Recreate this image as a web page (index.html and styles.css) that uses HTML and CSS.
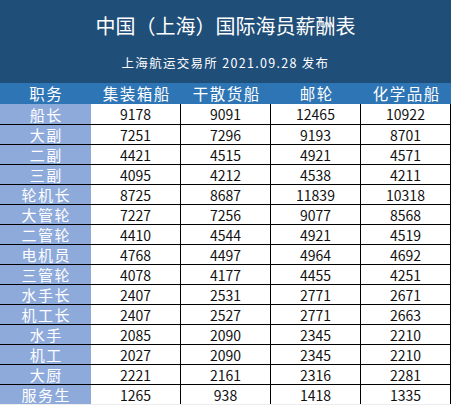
FILE: index.html
```html
<!DOCTYPE html>
<html lang="zh">
<head>
<meta charset="utf-8">
<link rel="stylesheet" href="styles.css">
</head>
<body>
<div class="sheet">
  <div class="banner">
    <div class="title">中国（上海）国际海员薪酬表</div>
    <div class="subtitle">上海航运交易所 2021.09.28 发布</div>
  </div>
  <div class="grid">
    <div class="hd">职务</div><div class="hd">集装箱船</div><div class="hd">干散货船</div><div class="hd">邮轮</div><div class="hd">化学品船</div>

    <div class="rk first">船长</div><div class="v first">9178</div><div class="v first">9091</div><div class="v first">12465</div><div class="v first">10922</div>
    <div class="rk">大副</div><div class="v">7251</div><div class="v">7296</div><div class="v">9193</div><div class="v">8701</div>
    <div class="rk">二副</div><div class="v">4421</div><div class="v">4515</div><div class="v">4921</div><div class="v">4571</div>
    <div class="rk">三副</div><div class="v">4095</div><div class="v">4212</div><div class="v">4538</div><div class="v">4211</div>
    <div class="rk">轮机长</div><div class="v">8725</div><div class="v">8687</div><div class="v">11839</div><div class="v">10318</div>
    <div class="rk">大管轮</div><div class="v">7227</div><div class="v">7256</div><div class="v">9077</div><div class="v">8568</div>
    <div class="rk">二管轮</div><div class="v">4410</div><div class="v">4544</div><div class="v">4921</div><div class="v">4519</div>
    <div class="rk">电机员</div><div class="v">4768</div><div class="v">4497</div><div class="v">4964</div><div class="v">4692</div>
    <div class="rk">三管轮</div><div class="v">4078</div><div class="v">4177</div><div class="v">4455</div><div class="v">4251</div>
    <div class="rk">水手长</div><div class="v">2407</div><div class="v">2531</div><div class="v">2771</div><div class="v">2671</div>
    <div class="rk">机工长</div><div class="v">2407</div><div class="v">2527</div><div class="v">2771</div><div class="v">2663</div>
    <div class="rk">水手</div><div class="v">2085</div><div class="v">2090</div><div class="v">2345</div><div class="v">2210</div>
    <div class="rk">机工</div><div class="v">2027</div><div class="v">2090</div><div class="v">2345</div><div class="v">2210</div>
    <div class="rk">大厨</div><div class="v">2221</div><div class="v">2161</div><div class="v">2316</div><div class="v">2281</div>
    <div class="rk">服务生</div><div class="v">1265</div><div class="v">938</div><div class="v">1418</div><div class="v">1335</div>
  </div>
</div>
</body>
</html>
```
FILE: styles.css
```css
html, body {
  margin: 0;
  padding: 0;
  background: #ededed;
}
body {
  font-family: "Noto Sans CJK SC", "Noto Sans", sans-serif;
  width: 451px;
  height: 405px;
  overflow: hidden;
}
.sheet {
  width: 451px;
  background: #ffffff;
}
.banner {
  height: 83px;
  background: #1f4e79;
  color: #ffffff;
  display: flex;
  flex-direction: column;
  align-items: center;
  box-sizing: border-box;
  padding-top: 13px;
}
.title {
  font-size: 20px;
  line-height: 26px;
}
.subtitle {
  margin-top: 16px;
  font-size: 12.5px;
  line-height: 16px;
  letter-spacing: 1.3px;
}
.grid {
  display: grid;
  grid-template-columns: 91px 90px 90px 90px 90px;
  grid-auto-rows: 20px;
  grid-template-rows: 21px;
  line-height: 1;
}
.grid > div {
  box-sizing: border-box;
  display: flex;
  align-items: center;
  justify-content: center;
  overflow: hidden;
}
.hd {
  background: #2e75b6;
  color: #ffffff;
  font-size: 15.5px;
  letter-spacing: 1.5px;
  padding-left: 1.5px;
}
.rk {
  background: #8eaadb;
  color: #ffffff;
  font-size: 15px;
  letter-spacing: 1.5px;
  padding-left: 1.5px;
  border-top: 1px solid #000000;
}
.v {
  background: #ffffff;
  color: #111111;
  font-size: 14px;
  border-top: 1px solid #000000;
  border-right: 1px solid #000000;
}
.first {
  border-top: none;
}
```
